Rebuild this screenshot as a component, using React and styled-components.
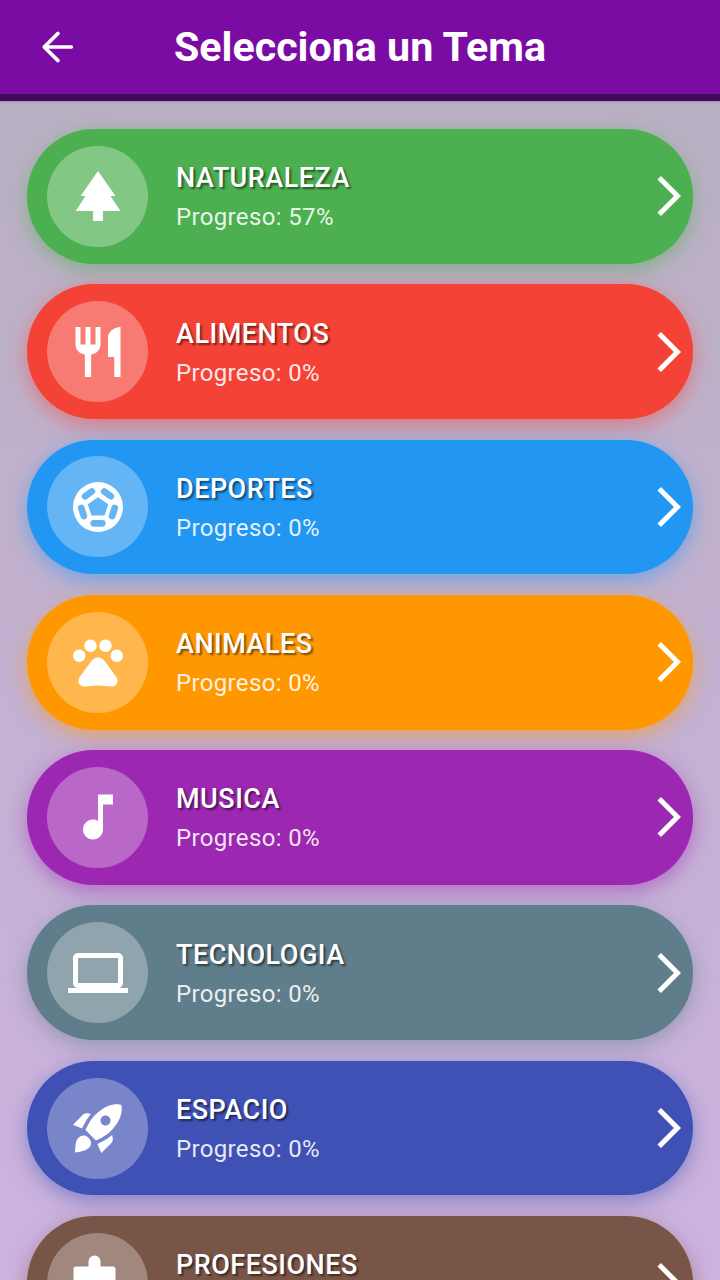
import React from "react"
import styled, { createGlobalStyle } from "styled-components"

const GlobalStyle = createGlobalStyle`
  html, body {
    margin: 0;
    padding: 0;
    height: 100%;
    overflow: hidden;
  }
`

const Screen = styled.div`
  width: 720px;
  height: 1280px;
  overflow: hidden;
  font-family: Roboto, "Liberation Sans", sans-serif;
  background: linear-gradient(180deg, #b8b0c1 0%, #cdb3e0 100%);
`

const Header = styled.header`
  height: 94px;
  border-bottom: 7px solid #40095c;
  background: #7a0ca3;
  display: flex;
  align-items: center;
  justify-content: center;
  position: relative;
  box-shadow: 0 1px 2px rgba(0, 0, 0, 0.2);
`

const BackButton = styled.svg`
  position: absolute;
  left: 33px;
  top: 23px;
  width: 48px;
  height: 48px;
  fill: none;
  stroke: #fff;
  stroke-width: 1.8;
  stroke-linecap: round;
  stroke-linejoin: round;
`

const Title = styled.h1`
  margin: 0;
  padding-top: 2px;
  color: #fff;
  font-size: 41.2px;
  font-weight: 700;
  line-height: 1;
`

const List = styled.main`
  display: flex;
  flex-direction: column;
  gap: 20.6px;
  padding: 28px 27px 0;
`

const Card = styled.div`
  flex: none;
  height: 134.7px;
  border-radius: 67px;
  background: ${props => props.color};
  box-shadow: 0 6px 20px ${props => props.color}80;
  display: flex;
  align-items: center;
  padding-left: 20px;
`

const IconCircle = styled.div`
  flex: none;
  width: 101px;
  height: 101px;
  border-radius: 50%;
  background: rgba(255, 255, 255, 0.3);
  display: flex;
  align-items: center;
  justify-content: center;
`

const Glyph = styled.svg`
  width: 60px;
  height: 60px;
  fill: #fff;
  fill-rule: evenodd;
`

const Texts = styled.div`
  flex: 1;
  margin-left: 28px;
  padding-top: 1px;
  display: flex;
  flex-direction: column;
  gap: 10px;
`

const Name = styled.div`
  color: #fff;
  font-size: 27px;
  font-weight: 500;
  line-height: 31px;
  letter-spacing: 0.5px;
  text-shadow: 2px 2px 2px rgba(0, 0, 0, 0.5);
`

const Progress = styled.div`
  color: rgba(255, 255, 255, 0.9);
  font-size: 24px;
  line-height: 26px;
  letter-spacing: 0.35px;
`

const Chevron = styled.svg`
  flex: none;
  width: 48px;
  height: 48px;
  fill: #fff;
`

// rounded panel of the ball, lying along the ring at the given angle
const panel = deg => {
  const a = (deg * Math.PI) / 180
  const cx = 12 + 6.5 * Math.cos(a)
  const cy = 12 + 6.5 * Math.sin(a)
  const tx = -Math.sin(a)
  const ty = Math.cos(a)
  const half = 1.7
  const r = 1.35
  const nx = Math.cos(a) * r
  const ny = Math.sin(a) * r
  const p = (s, n) =>
    `${(cx + tx * half * s + nx * n).toFixed(2)} ${(cy + ty * half * s + ny * n).toFixed(2)}`
  return `M${p(1, 1)}A${r} ${r} 0 0 1 ${p(1, -1)}L${p(-1, -1)}A${r} ${r} 0 0 1 ${p(-1, 1)}z`
}

const ball =
  "M12 2a10 10 0 1 0 0 20 10 10 0 0 0 0-20z" +
  "M12 8.1L16.1 10.9 14.6 15.4H9.4L7.9 10.9z" +
  [-126, -54, 18, 90, 162].map(panel).join("")

const icons = {
  tree: "M17 12h2L12 2 5.05 12H7l-3.9 6h6.92v4h3.95v-4H21z",
  food: "M11 9H9V2H7v7H5V2H3v7c0 2.12 1.66 3.84 3.75 3.97V22h2.5v-9.03C11.34 12.84 13 11.12 13 9V2h-2v7zm5-3v8h2.5v8H21V2c-2.76 0-5 2.24-5 4z",
  ball,
  paw: "M4.5 7a2.5 2.5 0 1 0 0 5 2.5 2.5 0 0 0 0-5zM9 3a2.5 2.5 0 1 0 0 5 2.5 2.5 0 0 0 0-5zM15 3a2.5 2.5 0 1 0 0 5 2.5 2.5 0 0 0 0-5zM19.5 7a2.5 2.5 0 1 0 0 5 2.5 2.5 0 0 0 0-5zM12 10.2c1.1 0 2 .6 2.8 1.6l3.8 5.2c1 1.4 1.4 2.2 1.2 3-.2 1-1 1.7-2 1.8-1.8.1-3.6-.4-5.8-.4s-4 .5-5.8.4c-1-.1-1.8-.8-2-1.8-.2-.8.2-1.6 1.2-3l3.8-5.2c.8-1 1.7-1.6 2.8-1.6z",
  note: "M12 3v10.55c-.59-.34-1.27-.55-2-.55-2.21 0-4 1.79-4 4s1.79 4 4 4 4-1.79 4-4V7h4V3h-6z",
  laptop: "M20 18c1.1 0 1.99-.9 1.99-2L22 6c0-1.1-.9-2-2-2H4c-1.1 0-2 .9-2 2v10c0 1.1.9 2 2 2H0v2h24v-2h-4zM4 6h16v10H4V6z",
  rocket: "M9.19 6.35c-2.04 2.29-3.44 5.58-3.57 5.89L2 10.69l4.05-4.05c.47-.47 1.15-.68 1.81-.55l1.33.26zM11.17 17s3.74-1.55 5.89-3.7c5.4-5.4 4.5-9.62 4.21-10.57-.95-.3-5.17-1.19-10.57 4.21C8.55 9.09 7 12.83 7 12.83L11.17 17zm6.48-2.19c-2.29 2.04-5.58 3.44-5.89 3.57L13.31 22l4.05-4.05c.47-.47.68-1.15.55-1.81l-.26-1.33zM2.8 21.8C3 19 3 17 4.2 15.9 5.4 14.8 7 14.6 8.1 15.8c1.3 1.2 1.6 2.8.3 4.1-1.4 1.3-3.4 1.6-5.6 1.9zM13 9c0-1.1.9-2 2-2s2 .9 2 2-.9 2-2 2-2-.9-2-2z",
  work: "M3.2 5.4h5V3.4a2.4 2.4 0 0 1 4.8 0v2h5a1 1 0 0 1 1 1V21H2.2V6.4a1 1 0 0 1 1-1z",
}

const themes = [
  { name: "NATURALEZA", progress: 57, color: "#4caf50", icon: "tree" },
  { name: "ALIMENTOS", progress: 0, color: "#f44336", icon: "food" },
  { name: "DEPORTES", progress: 0, color: "#2196f3", icon: "ball" },
  { name: "ANIMALES", progress: 0, color: "#ff9800", icon: "paw" },
  { name: "MUSICA", progress: 0, color: "#9c27b0", icon: "note" },
  { name: "TECNOLOGIA", progress: 0, color: "#607d8b", icon: "laptop" },
  { name: "ESPACIO", progress: 0, color: "#3f51b5", icon: "rocket" },
  { name: "PROFESIONES", progress: 0, color: "#795548", icon: "work" },
]

const App = () => (
  <Screen>
    <GlobalStyle />
    <Header>
      <BackButton viewBox="0 0 24 24">
        <path d="M19.2 12H5.6M12.5 5.2L5.6 12l6.9 6.8" />
      </BackButton>
      <Title>Selecciona un Tema</Title>
    </Header>
    <List>
      {themes.map(theme => (
        <Card key={theme.name} color={theme.color}>
          <IconCircle>
            <Glyph viewBox="0 0 24 24">
              <path d={icons[theme.icon]} />
            </Glyph>
          </IconCircle>
          <Texts>
            <Name>{theme.name}</Name>
            <Progress>Progreso: {theme.progress}%</Progress>
          </Texts>
          <Chevron viewBox="0 0 24 24">
            <path d="M6.23 20.23 8 22l10-10L8 2 6.23 3.77 14.46 12z" />
          </Chevron>
        </Card>
      ))}
    </List>
  </Screen>
)

export default App
